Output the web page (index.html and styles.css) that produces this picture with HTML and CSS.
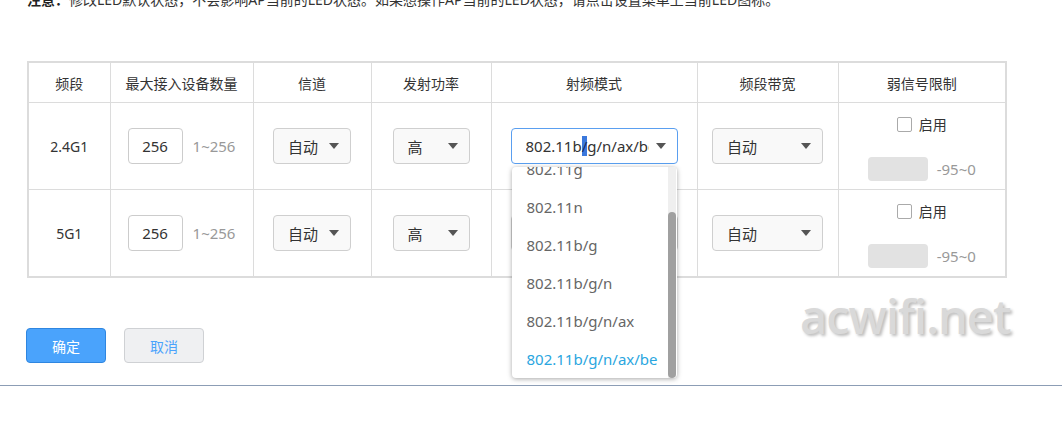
FILE: index.html
```html
<!DOCTYPE html>
<html lang="zh-CN">
<head>
  <meta charset="UTF-8" />
  <meta name="viewport" content="width=device-width, initial-scale=1.0"/>
  <title>射频设置</title>
  <link rel="stylesheet" href="styles.css">
</head>
<body>
  <p class="notice"><b>注意：</b>修改LED默认状态，不会影响AP当前的LED状态。如果想操作AP当前的LED状态，请点击设置菜单上当前LED图标。</p>

  <table class="radio-table">
    <colgroup>
      <col class="c-band">
      <col class="c-max">
      <col class="c-chan">
      <col class="c-power">
      <col class="c-mode">
      <col class="c-width">
      <col class="c-weak">
    </colgroup>
    <thead>
      <tr>
        <th>频段</th>
        <th>最大接入设备数量</th>
        <th>信道</th>
        <th>发射功率</th>
        <th>射频模式</th>
        <th>频段带宽</th>
        <th>弱信号限制</th>
      </tr>
    </thead>
    <tbody>
      <tr>
        <td>2.4G1</td>
        <td>
          <div class="limit">
            <span class="num-input">256</span>
            <span class="hint">1~256</span>
          </div>
        </td>
        <td><div class="select sel-chan"><span class="select-text">自动</span><i class="arrow"></i></div></td>
        <td><div class="select sel-power"><span class="select-text">高</span><i class="arrow"></i></div></td>
        <td>
          <div class="combo">
            <div class="select sel-mode focused">
              <span class="select-text mode-text">802.11b<span class="sel-mark">/</span>g/n/ax/be</span><i class="arrow"></i>
            </div>
            <div class="dropdown">
              <ul class="options">
                <li>802.11b</li>
                <li>802.11g</li>
                <li>802.11n</li>
                <li>802.11b/g</li>
                <li>802.11b/g/n</li>
                <li>802.11b/g/n/ax</li>
                <li class="active">802.11b/g/n/ax/be</li>
              </ul>
              <div class="scroll-track"><div class="scroll-thumb"></div></div>
            </div>
          </div>
        </td>
        <td><div class="select sel-width"><span class="select-text">自动</span><i class="arrow"></i></div></td>
        <td>
          <div class="weak">
            <label class="check"><span class="box"></span>启用</label>
            <div class="rssi">
              <span class="rssi-input"></span>
              <span class="hint">-95~0</span>
            </div>
          </div>
        </td>
      </tr>
      <tr>
        <td>5G1</td>
        <td>
          <div class="limit">
            <span class="num-input">256</span>
            <span class="hint">1~256</span>
          </div>
        </td>
        <td><div class="select sel-chan"><span class="select-text">自动</span><i class="arrow"></i></div></td>
        <td><div class="select sel-power"><span class="select-text">高</span><i class="arrow"></i></div></td>
        <td><div class="select sel-mode"><span class="select-text mode-text">802.11b/g/n/ax/be</span><i class="arrow"></i></div></td>
        <td><div class="select sel-width"><span class="select-text">自动</span><i class="arrow"></i></div></td>
        <td>
          <div class="weak">
            <label class="check"><span class="box"></span>启用</label>
            <div class="rssi">
              <span class="rssi-input"></span>
              <span class="hint">-95~0</span>
            </div>
          </div>
        </td>
      </tr>
    </tbody>
  </table>

  <div class="actions">
    <button class="btn btn-ok">确定</button>
    <button class="btn btn-cancel">取消</button>
  </div>

  <div class="divider"></div>

  <div class="watermark">acwifi.net</div>
</body>
</html>
```

FILE: styles.css
```css
body {
  margin: 0;
  width: 1062px;
  height: 435px;
  overflow: hidden;
  position: relative;
  background-color: #fff;
  color: #333;
  font-family: "Noto Sans", "Noto Sans CJK SC", sans-serif;
  font-size: 14px;
}

.notice {
  margin: -10px 0 0 27px;
  line-height: 20px;
  white-space: nowrap;
}

.notice b {
  color: #222;
}

/* table */

.radio-table {
  margin: 51px 0 0 27px;
  width: 978px;
  table-layout: fixed;
  border-collapse: collapse;
  border: 2px solid #dcdcdc;
}

.c-band { width: 82px; }
.c-max { width: 143px; }
.c-chan { width: 118px; }
.c-power { width: 120px; }
.c-mode { width: 206px; }
.c-width { width: 141px; }
.c-weak { width: 168px; }

.radio-table th,
.radio-table td {
  border: 1px solid #dcdcdc;
  padding: 0;
  text-align: center;
  vertical-align: middle;
}

.radio-table th {
  height: 39px;
  font-weight: normal;
  color: #333;
}

.radio-table td {
  height: 86px;
}

.limit {
  display: flex;
  justify-content: center;
  align-items: center;
  gap: 10px;
}

.num-input {
  width: 53px;
  height: 34px;
  line-height: 34px;
  border: 1px solid #ccc;
  border-radius: 4px;
  background-color: #fff;
  font-size: 15px;
  color: #333;
}

.hint {
  font-size: 15px;
  color: #999;
}

/* fake select */

.select {
  display: inline-flex;
  align-items: center;
  justify-content: space-between;
  box-sizing: border-box;
  height: 36px;
  padding: 0 11px 0 14px;
  border: 1px solid #cfcfcf;
  border-radius: 4px;
  background-color: #f9f9f9;
  font-size: 15px;
  color: #333;
  vertical-align: middle;
}

.sel-chan { width: 78px; }
.sel-power { width: 77px; }
.sel-width { width: 111px; }

.sel-mode {
  width: 167px;
  background-color: #fff;
}

.sel-mode.focused {
  border-color: #5a9ff0;
}

.select-text {
  white-space: nowrap;
  overflow: hidden;
  text-align: left;
}

.mode-text {
  width: 123px;
}

.sel-mark {
  background-color: #3b78dc;
  color: #1d2c5a;
}

.arrow {
  flex: none;
  width: 0;
  height: 0;
  border-left: 5px solid transparent;
  border-right: 5px solid transparent;
  border-top: 6px solid #555;
}

/* open dropdown over the table */

.combo {
  position: relative;
  display: inline-block;
}

.dropdown {
  position: absolute;
  top: 39px;
  left: 1px;
  width: 165px;
  height: 211px;
  overflow: hidden;
  background-color: #fff;
  border-radius: 4px;
  box-shadow: 0 1px 5px rgba(0, 0, 0, 0.35);
  z-index: 5;
}

.options {
  list-style: none;
  margin: -55px 0 0;
  padding: 0;
  text-align: left;
}

.options li {
  height: 38px;
  line-height: 38px;
  padding-left: 15px;
  font-size: 15px;
  color: #666;
}

.options li.active {
  color: #2aa6e0;
}

.scroll-track {
  position: absolute;
  top: 0;
  right: 1px;
  bottom: 0;
  width: 8px;
  background-color: #efefef;
}

.scroll-thumb {
  position: absolute;
  top: 45px;
  left: 0;
  right: 0;
  bottom: 0;
  border-radius: 4px;
  background-color: #a0a0a0;
}

/* weak signal */

.weak {
  display: flex;
  flex-direction: column;
  align-items: center;
  gap: 23px;
  margin-top: 3px;
}

.check {
  display: flex;
  align-items: center;
  gap: 7px;
  font-size: 14px;
  color: #333;
}

.check .box {
  width: 13px;
  height: 13px;
  border: 1px solid #aaa;
  border-radius: 2px;
  background-color: #fff;
}

.rssi {
  display: flex;
  align-items: center;
  gap: 9px;
}

.rssi-input {
  width: 60px;
  height: 24px;
  border-radius: 4px;
  background-color: #e2e2e2;
}

/* buttons */

.actions {
  display: flex;
  gap: 18px;
  margin: 50px 0 0 26px;
}

.btn {
  width: 80px;
  height: 35px;
  border-radius: 4px;
  font-family: "Noto Sans CJK SC", sans-serif;
  font-size: 14px;
  cursor: pointer;
}

.btn-ok {
  background-color: #4aa3fc;
  border: 1px solid #2f86e0;
  color: #fff;
}

.btn-cancel {
  background-color: #eff0f2;
  border: 1px solid #cfd1d4;
  color: #4aa3fc;
}

.divider {
  margin-top: 22px;
  height: 1px;
  background-color: #8c9db5;
}

.watermark {
  position: absolute;
  left: 800px;
  top: 293px;
  font-family: "Open Sans", sans-serif;
  font-weight: 600;
  font-size: 47px;
  line-height: 1;
  letter-spacing: -1px;
  color: #d9d9d9;
  text-shadow: 2px 2px 3px #bdbdbd;
}
```
